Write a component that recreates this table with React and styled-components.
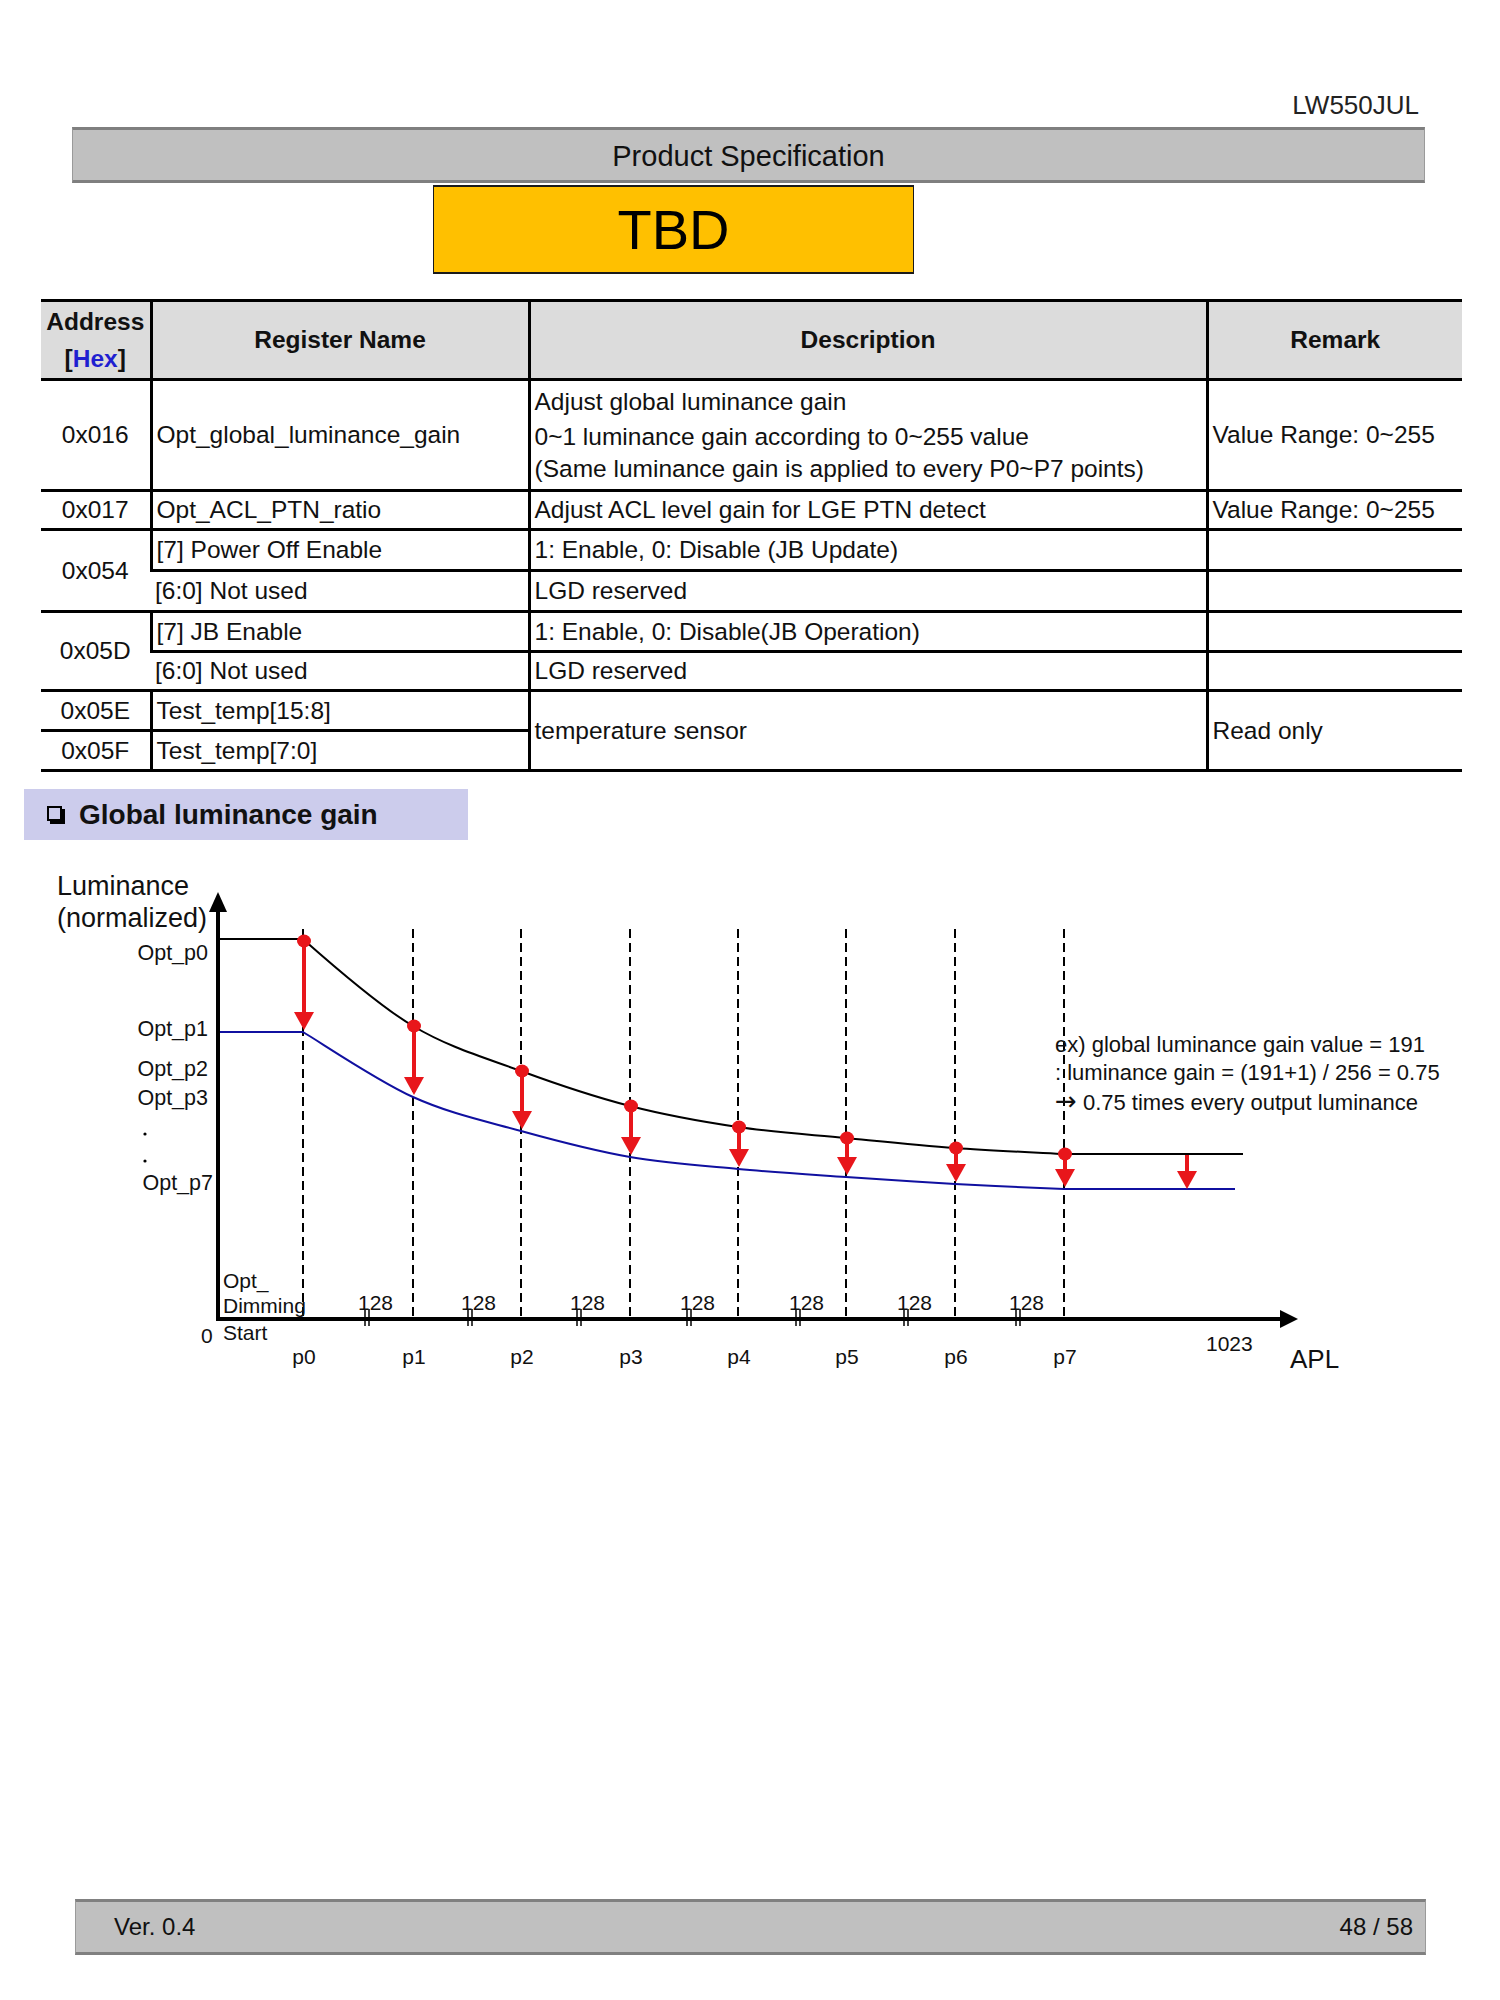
import React from 'react';
import styled, { createGlobalStyle } from 'styled-components';

const GlobalStyle = createGlobalStyle`
  body {
    margin: 0;
    background: #ffffff;
    font-family: "Liberation Sans", Arial, sans-serif;
    color: #111;
  }
`;

const rows = [
  {
    addr: '0x016',
    name: 'Opt_global_luminance_gain',
    desc: [
      'Adjust global luminance gain',
      '0~1 luminance gain according to 0~255 value',
      '(Same luminance gain is applied to every P0~P7 points)',
    ],
    remark: 'Value Range: 0~255',
    height: 111,
  },
  {
    addr: '0x017',
    name: 'Opt_ACL_PTN_ratio',
    desc: ['Adjust ACL level gain for LGE PTN detect'],
    remark: 'Value Range: 0~255',
    height: 39,
  },
];

const blackPts = [
  [303, 942], [413, 1027], [521, 1072], [630, 1107],
  [738, 1128], [846, 1139], [955, 1149], [1064, 1155],
];
const bluePts = [
  [303, 1033], [413, 1098], [521, 1132], [630, 1158],
  [738, 1170], [846, 1178], [955, 1185], [1064, 1190],
];
const breaks = [365, 468, 577, 687, 796, 904, 1016];
const optLabels = [
  { text: 'Opt_p0', y: 961, x: 208 },
  { text: 'Opt_p1', y: 1037, x: 208 },
  { text: 'Opt_p2', y: 1077, x: 208 },
  { text: 'Opt_p3', y: 1106, x: 208 },
  { text: 'Opt_p7', y: 1191, x: 213 },
];

// catmull-rom through the points -> cubic bezier segments
function smooth(pts) {
  let d = '';
  for (let i = 0; i < pts.length - 1; i++) {
    const p0 = pts[i - 1] || pts[i];
    const p1 = pts[i];
    const p2 = pts[i + 1];
    const p3 = pts[i + 2] || p2;
    const c1 = [p1[0] + (p2[0] - p0[0]) / 6, p1[1] + (p2[1] - p0[1]) / 6];
    const c2 = [p2[0] - (p3[0] - p1[0]) / 6, p2[1] - (p3[1] - p1[1]) / 6];
    d += ` C${c1[0]},${c1[1]} ${c2[0]},${c2[1]} ${p2[0]},${p2[1]}`;
  }
  return d;
}

function Arrow({ x, from, to, dot = true }) {
  return (
    <g>
      <line x1={x} y1={from} x2={x} y2={to - 15} stroke="#e8161b" strokeWidth="4" />
      <polygon points={`${x - 10},${to - 18} ${x + 10},${to - 18} ${x},${to}`} fill="#e8161b" />
      {dot && <ellipse cx={x} cy={from} rx="7" ry="6.5" fill="#e8161b" />}
    </g>
  );
}

function GainChart() {
  const blackPath = `M218,940 L303,940${smooth(blackPts)} L1243,1155`;
  const bluePath = `M218,1033 L303,1033${smooth(bluePts)} L1235,1190`;

  return (
    <Chart viewBox="0 860 1500 530" width="1500" height="530">
      {blackPts.map(([x], i) => (
        <line key={'d' + i} x1={x} y1="930" x2={x} y2="1318" stroke="#000" strokeWidth="2" strokeDasharray="9 5" />
      ))}

      <path d={blackPath} fill="none" stroke="#000" strokeWidth="2" />
      <path d={bluePath} fill="none" stroke="#1010a0" strokeWidth="2" />

      {blackPts.map(([x, y], i) => (
        <Arrow key={'a' + i} x={x + 1} from={y} to={bluePts[i][1] - 2} />
      ))}
      <Arrow x={1187} from={1156} to={1190} dot={false} />

      <line x1="218" y1="905" x2="218" y2="1322" stroke="#000" strokeWidth="4" />
      <polygon points="209,913 227,913 218,893" fill="#000" />
      <line x1="216" y1="1320" x2="1284" y2="1320" stroke="#000" strokeWidth="4" />
      <polygon points="1280,1311 1280,1329 1298,1320" fill="#000" />

      {breaks.map((b) => (
        <g key={b}>
          <line x1={b} y1="1310" x2={b} y2="1327" stroke="#000" strokeWidth="1.5" />
          <line x1={b + 4} y1="1310" x2={b + 4} y2="1327" stroke="#000" strokeWidth="1.5" />
          <ChartText x={b - 7} y="1311" size={21}>128</ChartText>
        </g>
      ))}

      <ChartText x="57" y="896" size={27}>Luminance</ChartText>
      <ChartText x="57" y="928" size={27}>(normalized)</ChartText>

      {optLabels.map((l) => (
        <ChartText key={l.text} x={l.x} y={l.y} size={21.5} textAnchor="end">{l.text}</ChartText>
      ))}
      <circle cx="145" cy="1135" r="1.6" fill="#000" />
      <circle cx="145" cy="1162" r="1.6" fill="#000" />

      <ChartText x="223" y="1289" size={21}>Opt_</ChartText>
      <ChartText x="223" y="1314" size={21}>Dimming</ChartText>
      <ChartText x="223" y="1341" size={21}>Start</ChartText>
      <ChartText x="201" y="1344" size={21}>0</ChartText>

      {blackPts.map(([x], i) => (
        <ChartText key={'p' + i} x={x + 1} y="1365" size={21} textAnchor="middle">{'p' + i}</ChartText>
      ))}
      <ChartText x="1206" y="1352" size={21}>1023</ChartText>
      <ChartText x="1290" y="1369" size={26}>APL</ChartText>

      <ChartText x="1055" y="1053" size={22}>ex) global luminance gain value = 191</ChartText>
      <ChartText x="1055" y="1081" size={22}>: luminance gain = (191+1) / 256 = 0.75</ChartText>
      <ChartText x="1055" y="1111" size={22}>
        <ArrowGlyph>→</ArrowGlyph> 0.75 times every output luminance
      </ChartText>
    </Chart>
  );
}

export default function App() {
  return (
    <>
      <GlobalStyle />
      <Page>
        <ModelTag>LW550JUL</ModelTag>
        <TitleBar>Product Specification</TitleBar>
        <TbdBox>TBD</TbdBox>

        <SpecTable>
          <colgroup>
            <col style={{ width: 110 }} />
            <col style={{ width: 378 }} />
            <col style={{ width: 678 }} />
            <col style={{ width: 255 }} />
          </colgroup>
          <thead>
            <tr style={{ height: 79 }}>
              <HeadCell>
                <HeadLine>Address</HeadLine>
                <HeadLine>[<Blue>Hex</Blue>]</HeadLine>
              </HeadCell>
              <HeadCell>Register Name</HeadCell>
              <HeadCell>Description</HeadCell>
              <HeadCell>Remark</HeadCell>
            </tr>
          </thead>
          <tbody>
            {rows.map((r) => (
              <tr key={r.addr} style={{ height: r.height }}>
                <Cell center>{r.addr}</Cell>
                <Cell>{r.name}</Cell>
                <Cell>
                  {r.desc.map((line, i) => (
                    <DescLine key={i} first={i === 0 && r.desc.length > 1}>{line}</DescLine>
                  ))}
                </Cell>
                <Cell>{r.remark}</Cell>
              </tr>
            ))}
            <tr style={{ height: 41 }}>
              <Cell center rowSpan={2}>0x054</Cell>
              <Cell>[7] Power Off Enable</Cell>
              <Cell>1: Enable, 0: Disable (JB Update)</Cell>
              <Cell />
            </tr>
            <tr style={{ height: 41 }}>
              <Cell>[6:0] Not used</Cell>
              <Cell>LGD reserved</Cell>
              <Cell />
            </tr>
            <tr style={{ height: 40 }}>
              <Cell center rowSpan={2}>0x05D</Cell>
              <Cell>[7] JB Enable</Cell>
              <Cell>1: Enable, 0: Disable(JB Operation)</Cell>
              <Cell />
            </tr>
            <tr style={{ height: 39 }}>
              <Cell>[6:0] Not used</Cell>
              <Cell>LGD reserved</Cell>
              <Cell />
            </tr>
            <tr style={{ height: 40 }}>
              <Cell center>0x05E</Cell>
              <Cell>Test_temp[15:8]</Cell>
              <Cell rowSpan={2}>temperature sensor</Cell>
              <Cell rowSpan={2}>Read only</Cell>
            </tr>
            <tr style={{ height: 40 }}>
              <Cell center>0x05F</Cell>
              <Cell>Test_temp[7:0]</Cell>
            </tr>
          </tbody>
        </SpecTable>

        <SectionTitle>
          <CheckBox />
          Global luminance gain
        </SectionTitle>

        <GainChart />

        <Footer>
          <span>Ver. 0.4</span>
          <span>48 / 58</span>
        </Footer>
      </Page>
    </>
  );
}

const Page = styled.div`
  width: 1500px;
  height: 2000px;
  display: flex;
  flex-direction: column;
  box-sizing: border-box;
`;

const ModelTag = styled.div`
  align-self: flex-end;
  margin: 90px 81px 0 0;
  font-size: 26px;
  line-height: 30px;
  color: #222;
`;

const TitleBar = styled.div`
  margin: 7px 75px 0 72px;
  height: 56px;
  box-sizing: border-box;
  background: #c0c0c0;
  border-top: 3px solid #7f7f7f;
  border-bottom: 3px solid #7f7f7f;
  border-left: 1px solid #9a9a9a;
  border-right: 1px solid #9a9a9a;
  display: flex;
  align-items: center;
  justify-content: center;
  padding-top: 3px;
  font-size: 29px;
  color: #111;
`;

const TbdBox = styled.div`
  margin: 2px 0 0 433px;
  width: 481px;
  height: 89px;
  box-sizing: border-box;
  background: #ffc000;
  border: 2px solid #1a1a1a;
  border-left-width: 1px;
  border-right-width: 1px;
  display: flex;
  align-items: center;
  justify-content: center;
  font-size: 56px;
  color: #000;
`;

const SpecTable = styled.table`
  margin: 25px 0 0 41px;
  width: 1421px;
  table-layout: fixed;
  border-collapse: collapse;
  font-size: 24.5px;
  color: #111;
`;

const HeadCell = styled.th`
  background: #dcdcdc;
  font-weight: bold;
  text-align: center;
  vertical-align: middle;
  padding: 0;
  border-top: 3px solid #000;
  border-bottom: 3px solid #000;
  border-left: 3px solid #000;
  &:first-child { border-left: none; }
`;

const HeadLine = styled.div`
  line-height: 37px;
`;

const Blue = styled.span`
  color: #1f1fd0;
`;

const Cell = styled.td`
  padding: 0 4px;
  text-align: ${(p) => (p.center ? 'center' : 'left')};
  vertical-align: middle;
  white-space: nowrap;
  line-height: 30px;
  border-bottom: 3px solid #000;
  border-left: 3px solid #000;
  &:first-child { border-left: none; }
`;

const DescLine = styled.div`
  line-height: 32px;
  margin-bottom: ${(p) => (p.first ? '3px' : '0')};
`;

const SectionTitle = styled.div`
  margin: 17px 0 0 24px;
  width: 444px;
  height: 51px;
  box-sizing: border-box;
  padding-left: 23px;
  background: #ccccec;
  display: flex;
  align-items: center;
  gap: 17px;
  font-size: 28px;
  font-weight: bold;
  color: #111;
`;

const CheckBox = styled.span`
  width: 11px;
  height: 11px;
  border: 2px solid #000;
  box-shadow: 3px 3px 0 #000;
  margin-top: -2px;
`;

const Chart = styled.svg`
  display: block;
  margin-top: 19px;
`;

const ChartText = styled.text`
  font-family: "Liberation Sans", Arial, sans-serif;
  font-size: ${(p) => p.size}px;
  fill: #111;
`;

const ArrowGlyph = styled.tspan`
  font-family: "DejaVu Sans", sans-serif;
  font-size: 26px;
`;

const Footer = styled.div`
  margin: auto 0 45px 75px;
  width: 1351px;
  height: 56px;
  box-sizing: border-box;
  padding: 0 12px 0 38px;
  background: #c0c0c0;
  border-top: 3px solid #808080;
  border-bottom: 3px solid #808080;
  border-left: 1px solid #9a9a9a;
  border-right: 1px solid #9a9a9a;
  display: flex;
  align-items: center;
  justify-content: space-between;
  font-size: 24px;
  color: #111;
`;
